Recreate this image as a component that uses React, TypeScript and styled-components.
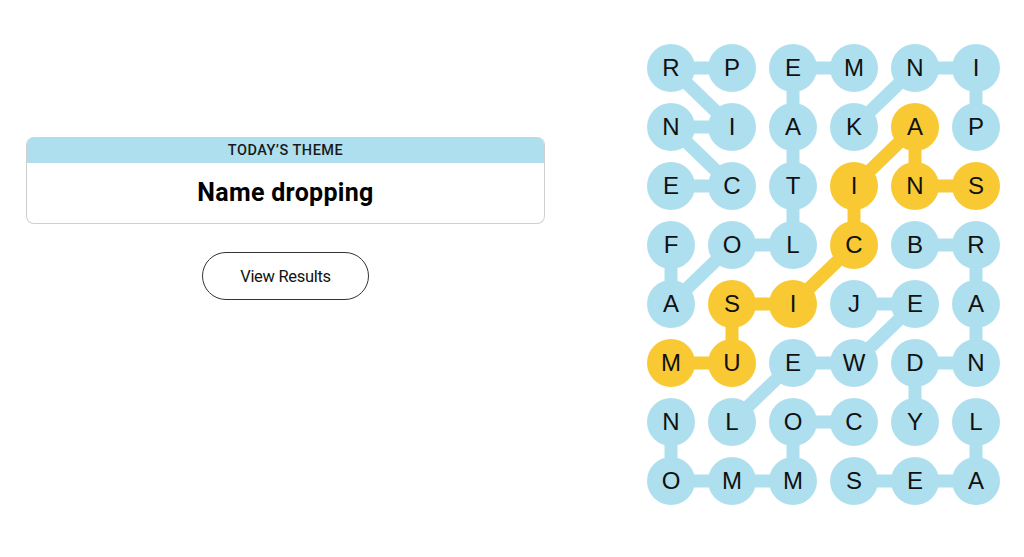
import styled, { createGlobalStyle } from "styled-components";

const BLUE = "#aedfee";
const YELLOW = "#f8c932";
const COL = 61;
const ROW = 59;
const CELL = 48;

const letters = [
  "RPEMNI",
  "NIAKAP",
  "ECTINS",
  "FOLCBR",
  "ASIJEA",
  "MUEWDN",
  "NLOCYL",
  "OMMSEA",
];

// spangram cells, "row-col"
const spangram = new Set(["1-4", "2-3", "2-4", "2-5", "3-3", "4-2", "4-1", "5-0", "5-1"]);

type Link = [number, number, number, number, boolean?];

const links: Link[] = [
  [0, 0, 0, 1],
  [0, 2, 0, 3],
  [0, 4, 0, 5],
  [0, 0, 1, 1],
  [0, 2, 1, 2],
  [0, 4, 1, 3],
  [0, 5, 1, 5],
  [1, 0, 1, 1],
  [1, 0, 2, 1],
  [1, 2, 2, 2],
  [1, 4, 2, 3, true],
  [1, 4, 2, 4, true],
  [2, 0, 2, 1],
  [2, 4, 2, 5, true],
  [2, 2, 3, 2],
  [2, 3, 3, 3, true],
  [3, 0, 4, 0],
  [3, 1, 3, 2],
  [3, 1, 4, 0],
  [3, 3, 4, 2, true],
  [3, 4, 3, 5],
  [3, 5, 4, 5],
  [4, 1, 4, 2, true],
  [4, 3, 4, 4],
  [4, 4, 5, 3],
  [4, 5, 5, 5],
  [4, 1, 5, 1, true],
  [5, 0, 5, 1, true],
  [5, 2, 5, 3],
  [5, 4, 5, 5],
  [5, 2, 6, 1],
  [5, 4, 6, 4],
  [6, 2, 6, 3],
  [6, 0, 7, 0],
  [6, 2, 7, 2],
  [6, 5, 7, 5],
  [7, 0, 7, 1],
  [7, 1, 7, 2],
  [7, 3, 7, 4],
  [7, 4, 7, 5],
];

const GlobalStyle = createGlobalStyle`
  html, body {
    margin: 0;
    padding: 0;
    background: #fff;
  }
  body {
    font-family: "Liberation Sans", Arial, sans-serif;
    color: #000;
  }
`;

const Page = styled.div`
  display: flex;
  align-items: flex-start;
  gap: 102px;
  padding: 44px 0 0 26px;
  height: 557px;
  box-sizing: border-box;
`;

const Side = styled.div`
  width: 519px;
  padding-top: 93px;
  display: flex;
  flex-direction: column;
  align-items: center;
`;

const ThemeCard = styled.div`
  width: 100%;
  border: 1px solid #cfcfcf;
  border-top: none;
  border-radius: 8px;
  overflow: hidden;
  box-sizing: border-box;
`;

const ThemeHeader = styled.div`
  background: ${BLUE};
  height: 26px;
  display: flex;
  align-items: center;
  justify-content: center;
  font-family: "Roboto", "Liberation Sans", sans-serif;
  font-size: 14.5px;
  font-weight: 500;
  letter-spacing: 0.5px;
  color: #1a1a1a;
  padding-top: 1px;
  box-sizing: border-box;
`;

const ThemeName = styled.div`
  height: 60px;
  display: flex;
  align-items: center;
  justify-content: center;
  font-family: "Roboto", "Liberation Sans", sans-serif;
  font-size: 25px;
  font-weight: 700;
  letter-spacing: 0.3px;
  padding-bottom: 2px;
  box-sizing: border-box;
`;

const ResultsButton = styled.button`
  margin-top: 28px;
  width: 167px;
  height: 48px;
  border: 1px solid #333;
  border-radius: 24px;
  background: #fff;
  font-family: "Roboto", "Liberation Sans", sans-serif;
  font-size: 16.5px;
  font-weight: 400;
  letter-spacing: -0.3px;
  color: #121212;
  cursor: pointer;
`;

const Board = styled.div`
  position: relative;
  width: ${COL * 5 + CELL}px;
  height: ${ROW * 7 + CELL}px;
`;

const Lines = styled.svg`
  position: absolute;
  inset: 0;
`;

const Cells = styled.div`
  position: relative;
  display: grid;
  grid-template-columns: repeat(6, ${CELL}px);
  grid-auto-rows: ${CELL}px;
  column-gap: ${COL - CELL}px;
  row-gap: ${ROW - CELL}px;
`;

const Cell = styled.div<{ $found: boolean }>`
  width: ${CELL}px;
  height: ${CELL}px;
  border-radius: 50%;
  background: ${(p) => (p.$found ? YELLOW : BLUE)};
  display: flex;
  align-items: center;
  justify-content: center;
  font-family: "Liberation Sans", Arial, sans-serif;
  font-size: 24px;
  color: #111;
`;

const cx = (c: number) => CELL / 2 + c * COL;
const cy = (r: number) => CELL / 2 + r * ROW;

export default function App() {
  return (
    <>
      <GlobalStyle />
      <Page>
        <Side>
          <ThemeCard>
            <ThemeHeader>TODAY’S THEME</ThemeHeader>
            <ThemeName>Name dropping</ThemeName>
          </ThemeCard>
          <ResultsButton>View Results</ResultsButton>
        </Side>
        <Board>
          <Lines width={COL * 5 + CELL} height={ROW * 7 + CELL}>
            {links.map(([r1, c1, r2, c2, y], i) => (
              <line
                key={i}
                x1={cx(c1)}
                y1={cy(r1)}
                x2={cx(c2)}
                y2={cy(r2)}
                stroke={y ? YELLOW : BLUE}
                strokeWidth={13}
              />
            ))}
          </Lines>
          <Cells>
            {letters.map((row, r) =>
              row.split("").map((ch, c) => (
                <Cell key={`${r}-${c}`} $found={spangram.has(`${r}-${c}`)}>
                  {ch}
                </Cell>
              ))
            )}
          </Cells>
        </Board>
      </Page>
    </>
  );
}
